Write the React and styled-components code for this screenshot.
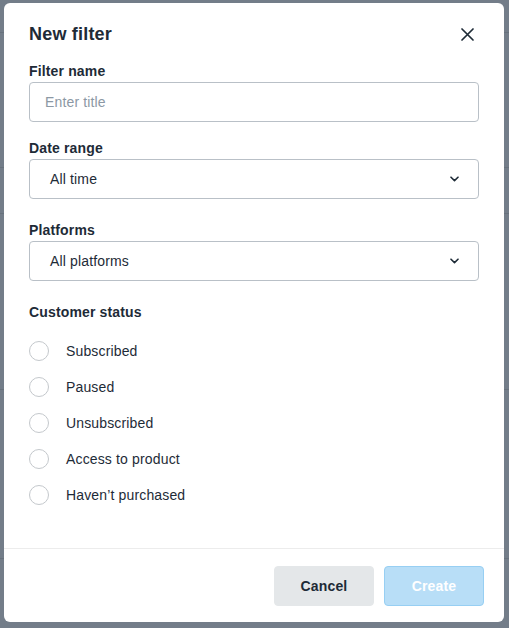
import React from "react";
import styled, { createGlobalStyle } from "styled-components";

const Global = createGlobalStyle`
  html, body { margin: 0; padding: 0; }
  body {
    font-family: "Liberation Sans", Arial, Helvetica, sans-serif;
    background: #737d89;
    width: 509px;
    height: 628px;
    overflow: hidden;
  }
  * { box-sizing: border-box; }
`;

const Page = styled.div`
  position: relative;
  width: 509px;
  height: 628px;
  background: #737d89;
  overflow: hidden;
`;

const BackRows = styled.div`
  display: flex;
  flex-direction: column;
`;

const BackRow = styled.div`
  height: ${(p) => p.$h}px;
  border-bottom: 1px solid #68727d;
`;

const Overlay = styled.div`
  position: absolute;
  inset: 0;
  display: flex;
  align-items: flex-start;
  justify-content: flex-start;
  padding: 3px 0 0 4px;
`;

const Modal = styled.div`
  width: 500px;
  height: 619px;
  background: #fff;
  border-radius: 6px;
  display: flex;
  flex-direction: column;
  color: #1e2b37;
  letter-spacing: 0.15px;
`;

const Body = styled.div`
  flex: 1;
  padding: 20px 25px 0 25px;
  display: flex;
  flex-direction: column;
`;

const Header = styled.div`
  display: flex;
  align-items: center;
  justify-content: space-between;
  height: 22px;
`;

const Title = styled.h2`
  margin: 0;
  font-size: 18px;
  line-height: 22px;
  font-weight: 700;
  letter-spacing: 0.2px;
  color: #1e2b37;
`;

const CloseButton = styled.button`
  width: 22px;
  height: 22px;
  padding: 0;
  margin-right: 1px;
  border: none;
  background: transparent;
  display: flex;
  align-items: center;
  justify-content: center;
  cursor: pointer;
`;

const Field = styled.div`
  display: flex;
  flex-direction: column;
  margin-top: ${(p) => p.$top}px;
`;

const Label = styled.label`
  font-size: 14px;
  line-height: 17px;
  font-weight: 700;
  color: #1e2b37;
  margin-bottom: 2px;
`;

const TextInput = styled.input`
  height: 40px;
  width: 100%;
  border: 1px solid #b9c0c7;
  border-radius: 4px;
  padding: 0 15px;
  font-family: inherit;
  font-size: 14px;
  letter-spacing: 0.15px;
  color: #1e2b37;
  outline: none;
  &::placeholder { color: #8c98a4; }
`;

const Select = styled.div`
  height: 40px;
  width: 100%;
  border: 1px solid #b9c0c7;
  border-radius: 4px;
  padding: 0 19px 0 20px;
  display: flex;
  align-items: center;
  justify-content: space-between;
  font-size: 14px;
  color: #1e2b37;
`;

const RadioList = styled.div`
  display: flex;
  flex-direction: column;
  margin-top: 10px;
`;

const RadioRow = styled.label`
  height: 36px;
  display: flex;
  align-items: center;
  gap: 17px;
  font-size: 14px;
  color: #1e2b37;
  cursor: pointer;
`;

const RadioCircle = styled.span`
  width: 20px;
  height: 20px;
  border-radius: 50%;
  border: 1px solid #c4c8cc;
  background: #fff;
  flex-shrink: 0;
`;

const Footer = styled.div`
  border-top: 1px solid #ececec;
  padding: 17px 20px 16px;
  display: flex;
  justify-content: flex-end;
  gap: 10px;
`;

const Button = styled.button`
  width: 100px;
  height: 40px;
  border-radius: 4px;
  font-family: inherit;
  font-size: 14px;
  font-weight: 700;
  letter-spacing: 0.15px;
  line-height: 36px;
  padding: 0 0 1px;
  border: 1px solid ${(p) => (p.$primary ? "#97cff3" : "#e4e7e9")};
  background: ${(p) => (p.$primary ? "#b8def7" : "#e4e7e9")};
  color: ${(p) => (p.$primary ? "#ffffff" : "#1e2b37")};
  cursor: pointer;
`;

const Chevron = () => (
  <svg width="9" height="6" viewBox="0 0 9 6" fill="none">
    <path d="M1 1.2 L4.5 4.6 L8 1.2" stroke="#1e2b37" strokeWidth="1.6" strokeLinecap="round" strokeLinejoin="round" />
  </svg>
);

const statuses = ["Subscribed", "Paused", "Unsubscribed", "Access to product", "Haven\u2019t purchased"];

export default function App() {
  return (
    <Page>
      <Global />
      <BackRows>
        <BackRow $h={33} />
        <BackRow $h={135} />
        <BackRow $h={46} />
        <BackRow $h={176} />
        <BackRow $h={169} />
      </BackRows>
      <Overlay>
        <Modal>
          <Body>
            <Header>
              <Title>New filter</Title>
              <CloseButton aria-label="Close">
                <svg width="13" height="13" viewBox="0 0 13 13">
                  <path d="M1 1 L12 12 M12 1 L1 12" stroke="#1e2b37" strokeWidth="1.7" strokeLinecap="round" />
                </svg>
              </CloseButton>
            </Header>
            <Field $top={18}>
              <Label>Filter name</Label>
              <TextInput placeholder="Enter title" />
            </Field>
            <Field $top={18}>
              <Label>Date range</Label>
              <Select>
                <span>All time</span>
                <Chevron />
              </Select>
            </Field>
            <Field $top={23}>
              <Label>Platforms</Label>
              <Select>
                <span>All platforms</span>
                <Chevron />
              </Select>
            </Field>
            <Field $top={23}>
              <Label>Customer status</Label>
              <RadioList>
                {statuses.map((s) => (
                  <RadioRow key={s}>
                    <RadioCircle />
                    <span>{s}</span>
                  </RadioRow>
                ))}
              </RadioList>
            </Field>
          </Body>
          <Footer>
            <Button>Cancel</Button>
            <Button $primary>Create</Button>
          </Footer>
        </Modal>
      </Overlay>
    </Page>
  );
}
